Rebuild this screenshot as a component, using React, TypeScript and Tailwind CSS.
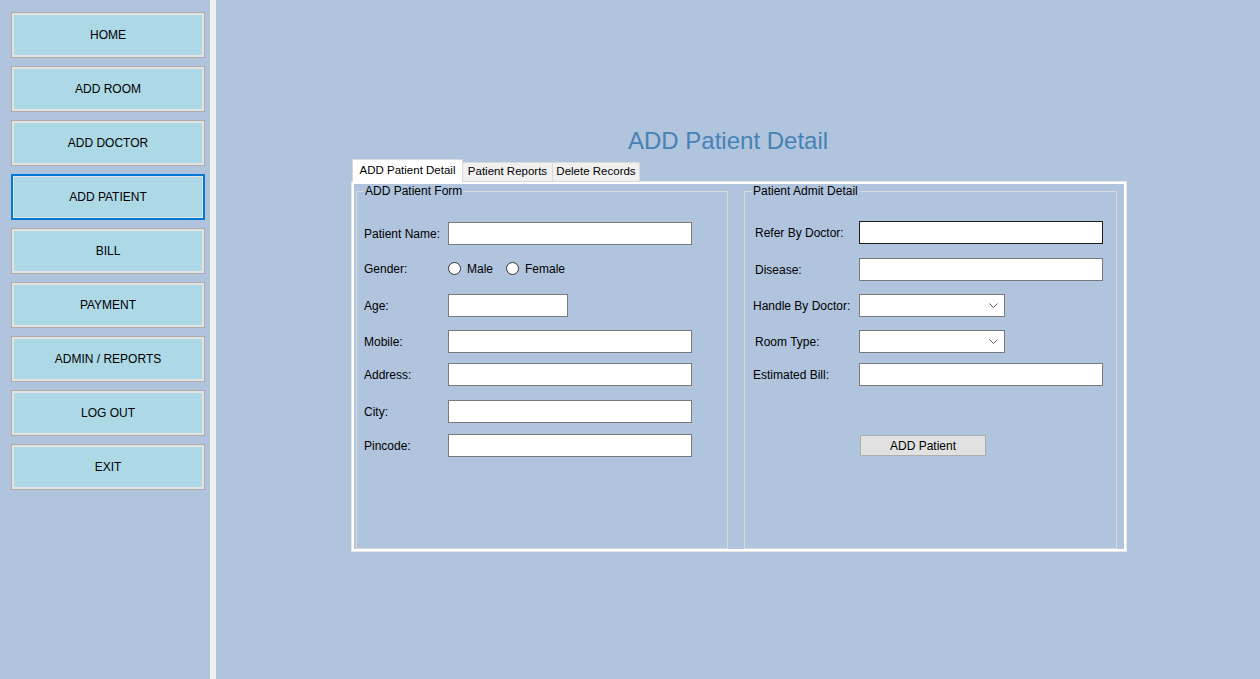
import React from "react";

const NAV = ["HOME", "ADD ROOM", "ADD DOCTOR", "ADD PATIENT", "BILL", "PAYMENT", "ADMIN / REPORTS", "LOG OUT", "EXIT"];

function NavButton({ label, active }: { label: string; active?: boolean }) {
  return (
    <button
      className={
        active
          ? "w-[194px] h-[46px] bg-[#add8e6] border-2 border-[#0078d7] shadow-[inset_0_0_0_1px_#e3e3e3] text-[12px] text-black"
          : "w-[194px] h-[46px] bg-[#add8e6] border border-[#adadad] shadow-[inset_0_0_0_2px_#e3e3e3] text-[12px] text-black"
      }
    >
      {label}
    </button>
  );
}

function TextBox({ w = 244, dark }: { w?: number; dark?: boolean }) {
  return (
    <div
      className={dark ? "h-[23px] bg-white border border-[#1e1e1e]" : "h-[23px] bg-white border border-[#7a7a7a]"}
      style={{ width: w }}
    />
  );
}

function Combo() {
  return (
    <div className="w-[146px] h-[23px] bg-white border border-[#7a7a7a] flex items-center justify-end pr-[6px]">
      <svg width="9" height="5" viewBox="0 0 9 5" fill="none">
        <path d="M0.5 0.5 L4.5 4.5 L8.5 0.5" stroke="#606060" strokeWidth="1" />
      </svg>
    </div>
  );
}

function Radio({ label }: { label: string }) {
  return (
    <div className="flex items-center gap-[6px]">
      <div className="w-[13px] h-[13px] rounded-full bg-white border border-[#333333]" />
      <span>{label}</span>
    </div>
  );
}

function Row({ label, mt, lw, children, shift }: { label: string; mt: number; lw: number; children: React.ReactNode; shift?: boolean }) {
  return (
    <div className="flex items-center h-[23px]" style={{ marginTop: mt }}>
      <span className={shift ? "-ml-[2px]" : ""} style={{ width: shift ? lw + 2 : lw }}>
        {label}
      </span>
      {children}
    </div>
  );
}

export default function App() {
  return (
    <div
      className="w-[1260px] h-[679px] overflow-hidden flex bg-[#b0c4de] text-[12px] text-black"
      style={{ fontFamily: '"Liberation Sans", Arial, sans-serif' }}
    >
      {/* sidebar */}
      <div className="w-[210px] h-full flex flex-col gap-[8px] pt-[12px] pl-[11px]">
        {NAV.map((n) => (
          <NavButton key={n} label={n} active={n === "ADD PATIENT"} />
        ))}
      </div>
      <div className="w-[6px] h-full bg-[#f0f0f0]" />

      {/* main */}
      <div className="flex-1 flex flex-col pt-[127px] pl-[135px]">
        <div className="ml-[277px] h-[32px] text-[24px] leading-[28px] text-[#4682b4]">ADD Patient Detail</div>

        {/* tabs */}
        <div className="flex items-end h-[23px] -mb-[1px] relative z-10 pl-[1px]">
          <div className="w-[111px] h-[23px] bg-white border border-b-0 border-[#d9d9d9] flex items-center justify-center text-[11.5px]">
            ADD Patient Detail
          </div>
          <div className="w-[90px] h-[20px] bg-[#f0f0f0] border border-l-0 border-[#d9d9d9] flex items-center justify-center text-[11.5px]">
            Patient Reports
          </div>
          <div className="w-[87px] h-[20px] bg-[#f0f0f0] border border-l-0 border-[#d9d9d9] flex items-center justify-center text-[11.5px]">
            Delete Records
          </div>
        </div>

        {/* tab page */}
        <div className="w-[776px] h-[371px] border border-[#e6e6e6]">
          <div className="w-full h-full border-2 border-white flex pl-[2px] gap-[16px]">
            <fieldset className="w-[372px] h-full border border-[#d9d9d9]">
              <legend className="ml-[7px] px-[1px] leading-[14px]">ADD Patient Form</legend>
              <div className="pl-[7px]">
                <Row label="Patient Name:" mt={24} lw={84}>
                  <TextBox />
                </Row>
                <Row label="Gender:" mt={12} lw={84}>
                  <div className="flex items-center gap-[13px]">
                    <Radio label="Male" />
                    <Radio label="Female" />
                  </div>
                </Row>
                <Row label="Age:" mt={14} lw={84}>
                  <TextBox w={120} />
                </Row>
                <Row label="Mobile:" mt={13} lw={84}>
                  <TextBox />
                </Row>
                <Row label="Address:" mt={10} lw={84}>
                  <TextBox />
                </Row>
                <Row label="City:" mt={14} lw={84}>
                  <TextBox />
                </Row>
                <Row label="Pincode:" mt={11} lw={84}>
                  <TextBox />
                </Row>
              </div>
            </fieldset>

            <fieldset className="w-[373px] h-full border border-[#d9d9d9]">
              <legend className="ml-[7px] px-[1px] leading-[14px]">Patient Admit Detail</legend>
              <div className="pl-[10px]">
                <Row label="Refer By Doctor:" mt={23} lw={104}>
                  <TextBox dark />
                </Row>
                <Row label="Disease:" mt={14} lw={104}>
                  <TextBox />
                </Row>
                <Row label="Handle By Doctor:" mt={13} lw={104} shift>
                  <Combo />
                </Row>
                <Row label="Room Type:" mt={13} lw={104}>
                  <Combo />
                </Row>
                <Row label="Estimated Bill:" mt={10} lw={104} shift>
                  <TextBox />
                </Row>
                <div className="flex mt-[49px] pl-[105px]">
                  <button className="w-[126px] h-[21px] bg-[#e1e1e1] border border-[#adadad] text-[12px]">ADD Patient</button>
                </div>
              </div>
            </fieldset>
          </div>
        </div>
      </div>
    </div>
  );
}
